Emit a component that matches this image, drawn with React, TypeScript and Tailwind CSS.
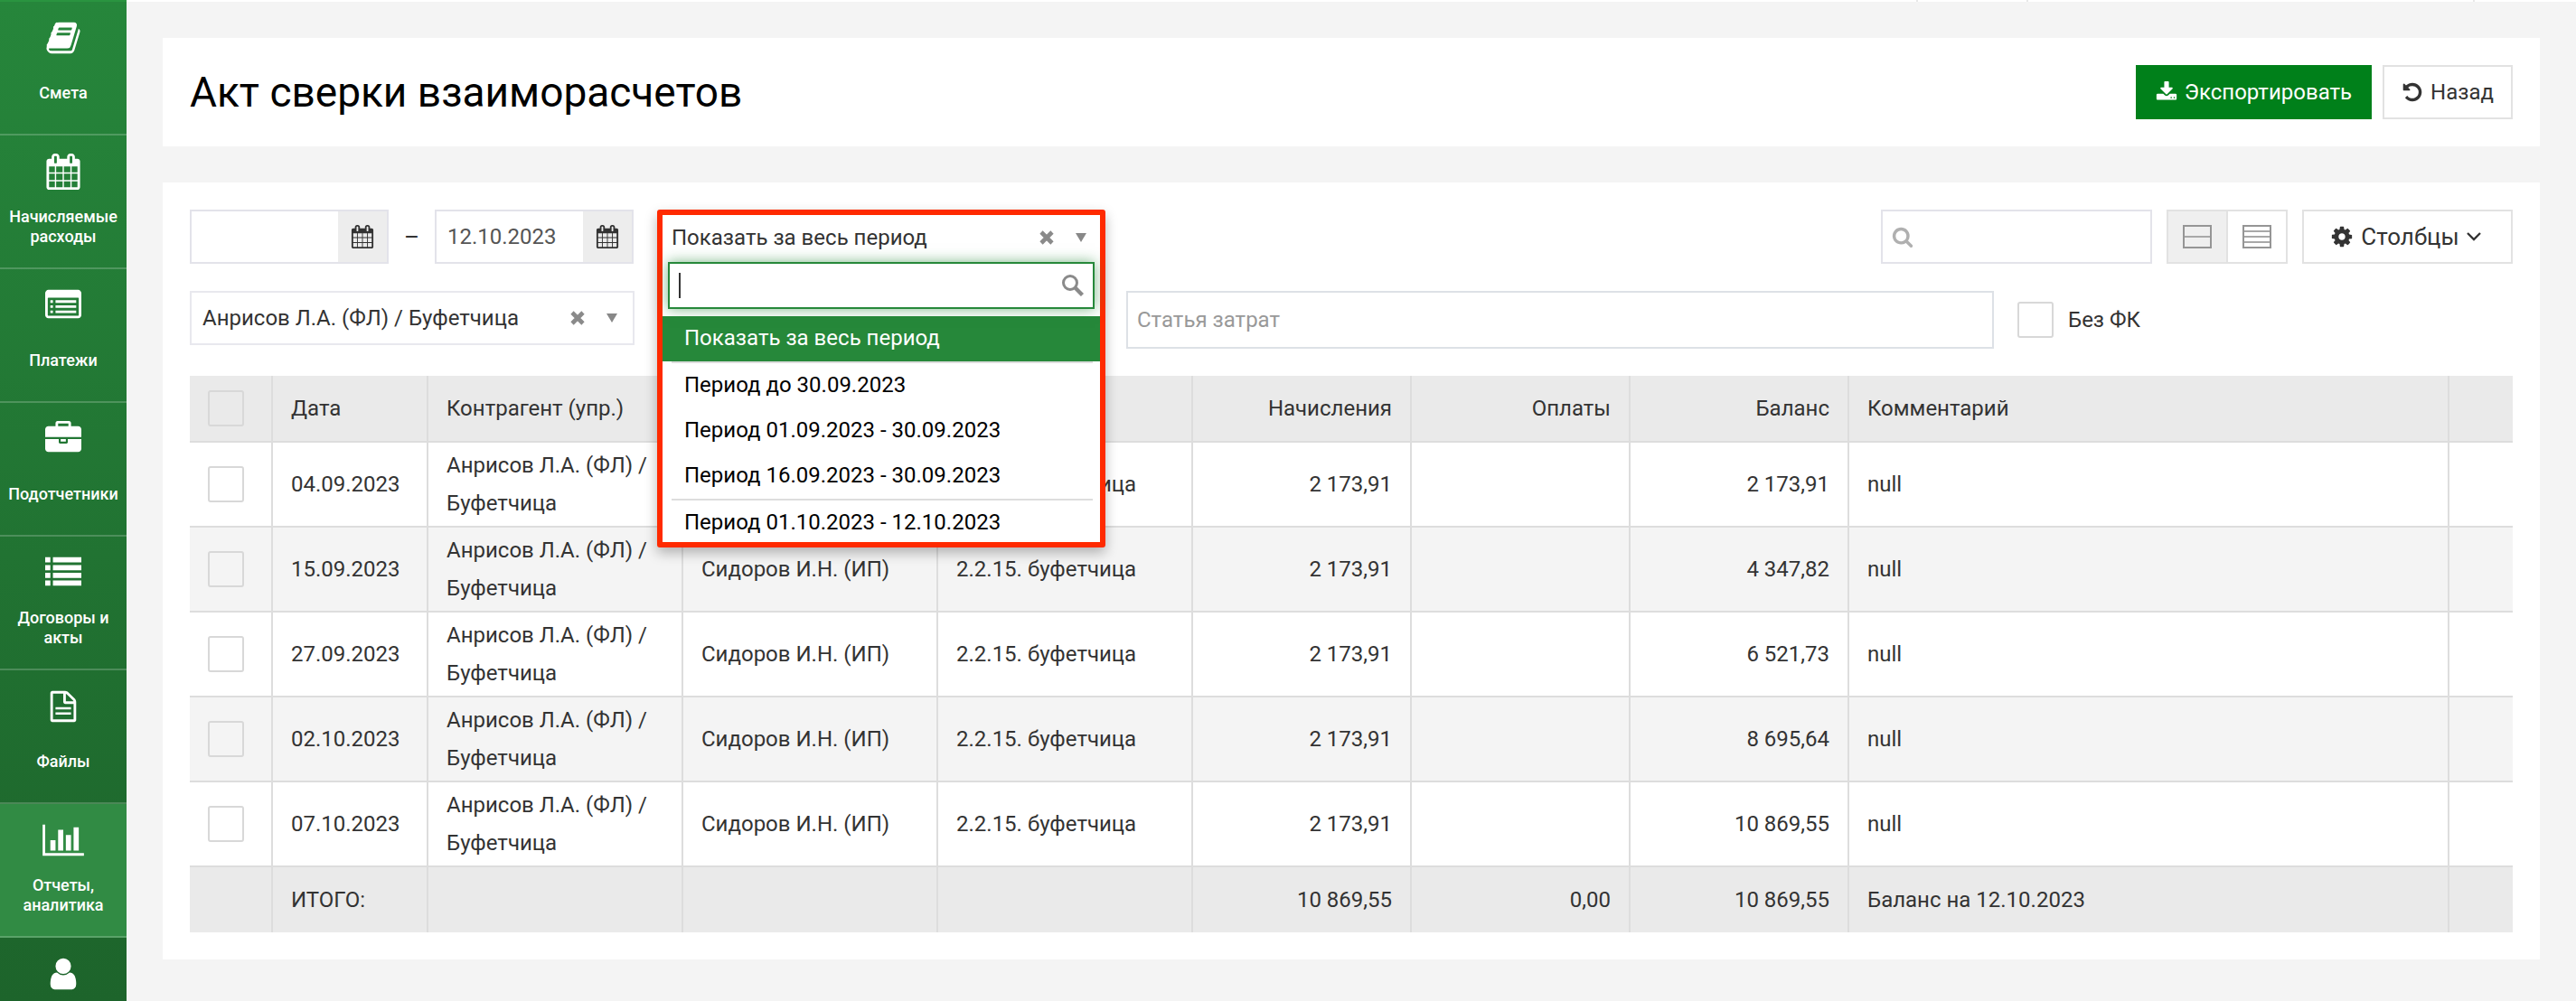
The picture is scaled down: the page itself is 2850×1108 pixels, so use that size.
import { useState } from "react";

const icons = {
  book: "M1703 478q40 57 18 129l-275 906q-19 64-76.5 107.5t-122.5 43.5h-923q-77 0-148.5-53.5t-99.5-131.5q-24-67-2-127 0-4 3-27t4-37q1-8-3-21.5t-3-19.5q2-11 8-21t16.5-23.5 16.5-23.5q23-38 45-91.5t30-91.5q3-10 .5-30t-.5-28q3-11 17-28t17-23q21-36 42-92t25-90q1-9-2.5-32t.5-28q4-13 22-30.5t22-22.5q19-26 42.5-84.5t27.5-96.5q1-8-3-25.5t-2-26.5q2-8 9-18t18-23 17-21q8-12 16.5-30.5t15-35 16-36 19.5-32 26.5-23.5 36-11.5 47.5 5.5l-1 3q38-9 51-9h761q74 0 114 56t18 130l-274 906q-36 119-71.5 153.5t-128.5 34.5h-869q-27 0-38 15-11 16-1 43 24 70 144 70h923q29 0 56-15.5t35-41.5l300-987q7-22 5-57 38 15 59 43zm-1064 2q-4 13 2 22.5t20 9.5h608q13 0 25.5-9.5t16.5-22.5l21-64q4-13-2-22.5t-20-9.5h-608q-13 0-25.5 9.5t-16.5 22.5zm-83 256q-4 13 2 22.5t20 9.5h608q13 0 25.5-9.5t16.5-22.5l21-64q4-13-2-22.5t-20-9.5h-608q-13 0-25.5 9.5t-16.5 22.5z",
  calendar:
    "M192 1664h288v-288h-288v288zm352 0h320v-288h-320v288zm-352-352h288v-320h-288v320zm352 0h320v-320h-320v320zm-352-384h288v-288h-288v288zm736 736h320v-288h-320v288zm-384-736h320v-288h-320v288zm768 736h288v-288h-288v288zm-384-352h320v-320h-320v320zm-352-864v-288q0-13-9.5-22.5t-22.5-9.5h-64q-13 0-22.5 9.5t-9.5 22.5v288q0 13 9.5 22.5t22.5 9.5h64q13 0 22.5-9.5t9.5-22.5zm736 864h288v-320h-288v320zm-384-384h320v-288h-320v288zm384 0h288v-288h-288v288zm32-480v-288q0-13-9.5-22.5t-22.5-9.5h-64q-13 0-22.5 9.5t-9.5 22.5v288q0 13 9.5 22.5t22.5 9.5h64q13 0 22.5-9.5t9.5-22.5zm384-64v1280q0 52-38 90t-90 38h-1408q-52 0-90-38t-38-90v-1280q0-52 38-90t90-38h128v-96q0-66 47-113t113-47h64q66 0 113 47t47 113v96h384v-96q0-66 47-113t113-47h64q66 0 113 47t47 113v96h128q52 0 90 38t38 90z",
  listAlt:
    "M256 1152h128v128h-128zM256 896h128v128h-128zM256 640h128v128h-128zM512 1152h1024v128h-1024zM512 896h1024v128h-1024zM512 640h1024v128h-1024zM1664 1376v-832q0-13-9.5-22.5t-22.5-9.5h-1472q-13 0-22.5 9.5t-9.5 22.5v832q0 13 9.5 22.5t22.5 9.5h1472q13 0 22.5-9.5t9.5-22.5zm128-1088v1088q0 66-47 113t-113 47h-1472q-66 0-113-47t-47-113v-1088q0-66 47-113t113-47h1472q66 0 113 47t47 113z",
  briefcase:
    "M640 256h512v-128h-512v128zm1152 640v480q0 66-47 113t-113 47h-1472q-66 0-113-47t-47-113v-480h672v160q0 26 19 45t45 19h320q26 0 45-19t19-45v-160h672zm-768 0v128h-256v-128h256zm768-480v384h-1792v-384q0-66 47-113t113-47h352v-160q0-40 28-68t68-28h576q40 0 68 28t28 68v160h352q66 0 113 47t47 113z",
  list: "M0 128h256v256h-256zM384 128h1408v256h-1408zM0 512h256v256h-256zM384 512h1408v256h-1408zM0 896h256v256h-256zM384 896h1408v256h-1408zM0 1280h256v256h-256zM384 1280h1408v256h-1408z",
  file: "M1468 508q28 28 48 76t20 88v896q0 40-28 68t-68 28h-1088q-40 0-68-28t-28-68v-1344q0-40 28-68t68-28h640q40 0 88 20t76 48zm-444-244v376h376q-10-29-22-41l-313-313q-12-12-41-22zm384 1272v-768h-416q-40 0-68-28t-28-68v-416h-512v1280h1024zM512 928h768v112h-768zM512 1184h768v112h-768z",
  chart:
    "M512 896v512h-256v-512h256zm384-512v1024h-256v-1024h256zm1024 1152v128h-2048v-1536h128v1408h1920zm-640-896v768h-256v-768h256zm384-384v1152h-256v-1152h256z",
  user: "M1536 1399q0 109-62.5 187t-150.5 78h-854q-88 0-150.5-78t-62.5-187q0-85 8.5-160.5t31.5-152 58.5-131 94-89 134.5-34.5q131 128 313 128t313-128q76 0 134.5 34.5t94 89 58.5 131 31.5 152 8.5 160.5zm-256-887q0 159-112.5 271.5t-271.5 112.5-271.5-112.5-112.5-271.5 112.5-271.5 271.5-112.5 271.5 112.5 112.5 271.5z",
  download:
    "M1344 1344q0-26-19-45t-45-19-45 19-19 45 19 45 45 19 45-19 19-45zm256 0q0-26-19-45t-45-19-45 19-19 45 19 45 45 19 45-19 19-45zm128-224v320q0 40-28 68t-68 28h-1472q-40 0-68-28t-28-68v-320q0-40 28-68t68-28h465l135 136q58 56 136 56t136-56l136-136h464q40 0 68 28t28 68zm-325-569q17 41-14 70l-448 448q-18 19-45 19t-45-19l-448-448q-31-29-14-70 17-39 59-39h256v-448q0-26 19-45t45-19h256q26 0 45 19t19 45v448h256q42 0 59 39z",
  undo: "M1664 896q0 156-61 298t-164 245-245 164-298 61q-172 0-327-72.5t-264-204.5q-7-10-6.5-22.5t8.5-20.5l137-138q10-9 25-9 16 2 23 12 73 95 179 147t225 52q104 0 198.5-40.5t163.5-109.5 109.5-163.5 40.5-198.5-40.5-198.5-109.5-163.5-163.5-109.5-198.5-40.5q-98 0-188 35.5t-160 101.5l137 138q31 30 14 69-17 40-59 40h-448q-26 0-45-19t-19-45v-448q0-42 40-59 39-17 69 14l130 129q107-101 244.5-156.5t284.5-55.5q156 0 298 61t245 164 164 245 61 298z",
  cog: "M1152 896q0-106-75-181t-181-75-181 75-75 181 75 181 181 75 181-75 75-181zm512-109v222q0 12-8 23t-20 13l-185 28q-19 54-39 91 35 50 107 138 10 12 10 25t-9 23q-27 37-99 108t-94 71q-12 0-26-9l-138-108q-44 23-91 38-16 136-29 186-7 28-36 28h-222q-14 0-24.5-8.5t-11.5-21.5l-28-184q-49-16-90-37l-141 107q-10 9-25 9-14 0-25-11-126-114-165-168-7-10-7-23 0-12 8-23 15-21 51-66.5t54-70.5q-27-50-41-99l-183-27q-13-2-21-12.5t-8-23.5v-222q0-12 8-23t19-13l186-28q14-46 39-92-40-57-107-138-10-12-10-24 0-10 9-23 26-36 98.5-107.5t94.5-71.5q13 0 26 10l138 107q44-23 91-38 16-136 29-186 7-28 36-28h222q14 0 24.5 8.5t11.5 21.5l28 184q49 16 90 37l142-107q9-9 24-9 13 0 25 10 129 119 165 170 7 8 7 22 0 12-8 23-15 21-51 66.5t-54 70.5q26 50 41 98l183 28q13 2 21 12.5t8 23.5z",
  search:
    "M1216 832q0-185-131.5-316.5t-316.5-131.5-316.5 131.5-131.5 316.5 131.5 316.5 316.5 131.5 316.5-131.5 131.5-316.5zm512 832q0 52-38 90t-90 38q-54 0-90-38l-343-342q-179 124-399 124-143 0-273.5-55.5t-225-150-150-225-55.5-273.5 55.5-273.5 150-225 225-150 273.5-55.5 273.5 55.5 225 150 150 225 55.5 273.5q0 220-124 399l343 343q37 37 37 90z",
};

type IconName = keyof typeof icons;

function Icon({ name, className }: { name: IconName; className: string }) {
  return (
    <svg viewBox="0 0 1792 1792" fill="currentColor" overflow="visible" className={className} aria-hidden="true">
      <path d={icons[name]} />
    </svg>
  );
}

const menu: { icon: IconName; label: string; active?: boolean }[] = [
  { icon: "book", label: "Смета" },
  { icon: "calendar", label: "Начисляемые расходы" },
  { icon: "listAlt", label: "Платежи" },
  { icon: "briefcase", label: "Подотчетники" },
  { icon: "list", label: "Договоры и акты" },
  { icon: "file", label: "Файлы" },
  { icon: "chart", label: "Отчеты, аналитика", active: true },
  { icon: "user", label: "" },
];

const rows = [
  { date: "04.09.2023", accrued: "2 173,91", balance: "2 173,91" },
  { date: "15.09.2023", accrued: "2 173,91", balance: "4 347,82" },
  { date: "27.09.2023", accrued: "2 173,91", balance: "6 521,73" },
  { date: "02.10.2023", accrued: "2 173,91", balance: "8 695,64" },
  { date: "07.10.2023", accrued: "2 173,91", balance: "10 869,55" },
];

const periodGroups = [
  ["Показать за весь период"],
  ["Период до 30.09.2023", "Период 01.09.2023 - 30.09.2023", "Период 16.09.2023 - 30.09.2023"],
  ["Период 01.10.2023 - 12.10.2023"],
];

const cell = "border-r-2 border-b-2 border-[#dddddd] px-5 last:border-r-0";
const footCell = "border-r-2 border-[#dddddd] px-5 last:border-r-0";
const checkbox = "block h-10 w-10 shrink-0 appearance-none rounded-[3px] border-2 border-[#d8d8d8]";

function Sidebar() {
  return (
    <nav className="h-screen w-[140px] shrink-0 overflow-hidden border-t-2 border-[#2a9440] bg-linear-to-b from-[#26863b] to-[#1d642b]">
      {menu.map((item) => (
        <a
          key={item.icon}
          href="#"
          aria-label={item.label || "Профиль"}
          className={`flex h-[148px] flex-col items-center border-b-2 border-white/20 pt-5 text-white ${
            item.active ? "bg-[#318b44]" : ""
          }`}
        >
          <Icon name={item.icon} className="h-10 w-10" />
          <span className="mt-5 flex h-[42px] items-center px-1 text-center text-[18px] leading-[22px] font-medium">
            {item.label}
          </span>
        </a>
      ))}
    </nav>
  );
}

function DateField({ label, value }: { label: string; value: string }) {
  return (
    <div className="flex h-[60px] w-[220px] border-2 border-[#e3e3ea]">
      <input
        type="text"
        aria-label={label}
        defaultValue={value}
        className="w-0 flex-1 bg-white px-3 text-[#555555] outline-none"
      />
      <button type="button" aria-label="Календарь" className="flex w-[54px] items-center justify-center bg-[#ededed]">
        <Icon name="calendar" className="h-[26px] w-[26px]" />
      </button>
    </div>
  );
}

function Cross() {
  return (
    <svg viewBox="0 0 16 16" className="h-4 w-4" aria-hidden="true">
      <path d="M2 2l12 12M14 2l-12 12" stroke="#8a8a8a" strokeWidth="4.6" />
    </svg>
  );
}

function Triangle() {
  return (
    <svg viewBox="0 0 12 10" className="h-[10px] w-3" aria-hidden="true">
      <path d="M0 0h12l-6 10z" fill="#888888" />
    </svg>
  );
}

function PeriodSelect() {
  const [selected, setSelected] = useState(periodGroups[0][0]);

  return (
    <div className="absolute top-0 left-0 z-10 flex h-[374px] w-full flex-col overflow-visible rounded-[3px] border-[6px] border-[#ff2a00] bg-white shadow-[0_6px_14px_rgba(0,0,0,0.28)]">
      <div className="flex h-[52px] shrink-0 items-center pr-[15px] pb-[2px] pl-[10px]">
        <button type="button" aria-haspopup="listbox" aria-expanded="true" className="flex-1 text-left">
          {selected}
        </button>
        <button type="button" aria-label="Очистить" className="mr-6">
          <Cross />
        </button>
        <Triangle />
      </div>
      <div className="relative mx-[6px] mb-2 shrink-0">
        <input
          type="text"
          aria-label="Поиск периода"
          className="block h-[52px] w-full border-2 border-[#26883a] bg-white px-3 shadow-[0_0_14px_rgba(38,136,58,0.6)] outline-none"
        />
        <span className="absolute top-3 left-3 h-7 w-[2px] bg-[#333333]" />
        <svg viewBox="0 0 24 24" className="absolute top-[14px] right-3 h-6 w-6" aria-hidden="true">
          <circle cx="9" cy="9" r="7.5" fill="none" stroke="#8a8a8a" strokeWidth="3" />
          <path d="M14.5 14.5l8 8" stroke="#8a8a8a" strokeWidth="4.4" />
        </svg>
      </div>
      <ul role="listbox" aria-label="Период" className="min-h-0 flex-1 overflow-hidden text-black">
        {periodGroups.map((group, i) => (
          <li key={i}>
            {i > 0 && <div className="mr-2 ml-[10px] h-[2px] bg-[#dddddd]" />}
            <ul>
              {group.map((option) => (
                <li
                  key={option}
                  role="option"
                  aria-selected={option === selected}
                  onClick={() => setSelected(option)}
                  className={`flex h-[50px] items-center pb-[2px] pl-6 ${
                    option === selected ? "bg-[#26883a] text-white" : ""
                  }`}
                >
                  {option}
                </li>
              ))}
            </ul>
          </li>
        ))}
      </ul>
    </div>
  );
}

function Toolbar() {
  return (
    <div className="flex items-start">
      <div className="flex w-[491px] items-center justify-between">
        <DateField label="Дата с" value="" />
        <span className="text-[26px]">–</span>
        <DateField label="Дата по" value="12.10.2023" />
      </div>
      <div className="relative ml-[26px] h-[60px] w-[496px]">
        <PeriodSelect />
      </div>
      <div className="ml-auto flex gap-4">
        <div className="relative">
          <Icon name="search" className="absolute top-[18px] left-3 h-6 w-6 text-[#b0b0b0]" />
          <input
            type="search"
            aria-label="Поиск"
            className="block h-[60px] w-[300px] border-2 border-[#e3e3ea] bg-white pr-3 pl-12 outline-none"
          />
        </div>
        <div className="flex h-[60px] border-2 border-[#e2e2e2]">
          <button
            type="button"
            aria-label="Просторный вид"
            className="flex w-[66px] items-center justify-center border-r-2 border-[#e2e2e2] bg-[#efefef]"
          >
            <svg viewBox="0 0 32 26" className="h-[26px] w-8" fill="none" strokeWidth="2" aria-hidden="true">
              <path d="M1 13h30" stroke="#a8a8a8" />
              <path d="M1 1h30v24h-30z" stroke="#959595" />
            </svg>
          </button>
          <button type="button" aria-label="Компактный вид" className="flex w-16 items-center justify-center">
            <svg viewBox="0 0 32 26" className="h-[26px] w-8" fill="none" strokeWidth="2" aria-hidden="true">
              <path d="M1 7h30M1 13h30M1 19h30" stroke="#a8a8a8" />
              <path d="M1 1h30v24h-30z" stroke="#959595" />
            </svg>
          </button>
        </div>
        <button
          type="button"
          className="flex h-[60px] w-[233px] items-center justify-center border-2 border-[#e2e2e2] pr-1 text-[26px]"
        >
          <Icon name="cog" className="mr-2 h-[26px] w-[26px]" />
          Столбцы
          <svg viewBox="0 0 16 10" className="ml-2 h-[10px] w-4" fill="none" stroke="#333333" strokeWidth="2.4" aria-hidden="true">
            <path d="M1 1l7 7l7-7" />
          </svg>
        </button>
      </div>
    </div>
  );
}

function Filters() {
  return (
    <div className="mt-[30px] flex items-start gap-[26px]">
      <div className="relative w-[492px] shrink-0">
        <select
          aria-label="Контрагент"
          className="block h-[60px] w-full appearance-none border-2 border-[#e8e8ee] bg-white pr-20 pl-3 outline-none"
        >
          <option>Анрисов Л.А. (ФЛ) / Буфетчица</option>
        </select>
        <div className="pointer-events-none absolute inset-y-0 right-[19px] flex items-center">
          <button type="button" aria-label="Очистить" className="mr-6">
            <Cross />
          </button>
          <Triangle />
        </div>
      </div>
      {/* second filter slot, sits under the open period list */}
      <div className="h-[60px] w-[492px] shrink-0" />
      <input
        type="text"
        aria-label="Статья затрат"
        placeholder="Статья затрат"
        className="h-16 min-w-0 max-w-[960px] flex-1 border-2 border-[#dde1e6] bg-white px-[10px] outline-none placeholder:text-[#999999]"
      />
      <label className="flex h-16 items-center gap-4">
        <input type="checkbox" className={checkbox} />
        Без ФК
      </label>
    </div>
  );
}

function ReportTable() {
  return (
    <table className="mt-[30px] w-full table-fixed border-separate border-spacing-0 text-left leading-[42px]">
      <colgroup>
        <col className="w-[92px]" />
        <col className="w-[172px]" />
        <col className="w-[282px]" />
        <col className="w-[282px]" />
        <col className="w-[282px]" />
        <col className="w-[242px]" />
        <col className="w-[242px]" />
        <col className="w-[242px]" />
        <col />
        <col className="w-[70px]" />
      </colgroup>
      <thead className="bg-[#eaeaea]">
        <tr className="h-[74px] *:font-normal">
          <th className={cell}>
            <input type="checkbox" aria-label="Выбрать все" className={checkbox} />
          </th>
          <th className={cell}>Дата</th>
          <th className={cell}>Контрагент (упр.)</th>
          <th className={cell} />
          <th className={cell} />
          <th className={`${cell} text-right`}>Начисления</th>
          <th className={`${cell} text-right`}>Оплаты</th>
          <th className={`${cell} text-right`}>Баланс</th>
          <th className={cell}>Комментарий</th>
          <th className={cell} />
        </tr>
      </thead>
      <tbody>
        {rows.map((row) => (
          <tr key={row.date} className="h-[94px] even:bg-[#f4f4f4]">
            <td className={cell}>
              <input type="checkbox" aria-label={row.date} className={checkbox} />
            </td>
            <td className={cell}>{row.date}</td>
            <td className={cell}>Анрисов Л.А. (ФЛ) / Буфетчица</td>
            <td className={cell}>Сидоров И.Н. (ИП)</td>
            <td className={cell}>2.2.15. буфетчица</td>
            <td className={`${cell} text-right`}>{row.accrued}</td>
            <td className={cell} />
            <td className={`${cell} text-right`}>{row.balance}</td>
            <td className={cell}>null</td>
            <td className={cell} />
          </tr>
        ))}
      </tbody>
      <tfoot className="bg-[#eaeaea]">
        <tr className="h-[72px]">
          <td className={footCell} />
          <td className={footCell}>ИТОГО:</td>
          <td className={footCell} />
          <td className={footCell} />
          <td className={footCell} />
          <td className={`${footCell} text-right`}>10 869,55</td>
          <td className={`${footCell} text-right`}>0,00</td>
          <td className={`${footCell} text-right`}>10 869,55</td>
          <td className={footCell}>Баланс на 12.10.2023</td>
          <td className={footCell} />
        </tr>
      </tfoot>
    </table>
  );
}

export default function App() {
  return (
    <div className="flex min-h-screen bg-[#f4f4f4] font-['Roboto',sans-serif] text-[24px] leading-8 text-[#333333]">
      <Sidebar />
      <div className="min-w-0 flex-1">
        {/* bottom edge of the top bar with its dividers */}
        <div className="flex h-[2px] justify-end bg-white">
          <div className="w-[122px] border-l-2 border-[#e8e8e8]" />
          <div className="w-[494px] border-l-2 border-[#e8e8e8]" />
          <div className="w-[114px] border-l-2 border-[#e8e8e8]" />
        </div>
        <main className="px-10 pt-10">
          <header className="flex h-[120px] items-center bg-white px-[30px]">
            <h1 className="text-[46px] leading-[60px] text-black">Акт сверки взаиморасчетов</h1>
            <div className="ml-auto flex gap-3">
              <button type="button" className="flex h-[60px] items-center gap-2 bg-[#00801a] px-[22px] text-white">
                <Icon name="download" className="h-6 w-6" />
                Экспортировать
              </button>
              <button type="button" className="flex h-[60px] items-center gap-2 border-2 border-[#e2e2e2] px-[19px]">
                <Icon name="undo" className="h-6 w-6" />
                Назад
              </button>
            </div>
          </header>
          <section className="mt-10 bg-white p-[30px]">
            <Toolbar />
            <Filters />
            <ReportTable />
          </section>
        </main>
      </div>
    </div>
  );
}
